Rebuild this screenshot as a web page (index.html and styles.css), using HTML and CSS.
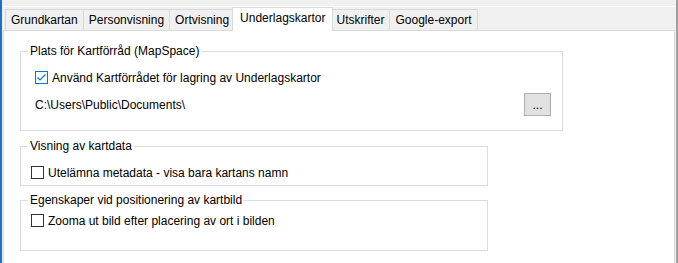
FILE: index.html
```html
<!DOCTYPE html>
<html lang="sv">
<head>
<meta charset="utf-8">
<title>Underlagskartor</title>
<link rel="stylesheet" href="styles.css">
</head>
<body>
<div class="window">
  <div class="topbar"></div>
  <div class="topline"></div>
  <div class="tabs">
    <div class="tab">Grundkartan</div>
    <div class="tab">Personvisning</div>
    <div class="tab">Ortvisning</div>
    <div class="tab selected">Underlagskartor</div>
    <div class="tab">Utskrifter</div>
    <div class="tab">Google-export</div>
  </div>
  <div class="panel">
    <fieldset class="group group-wide">
      <legend>Plats för Kartförråd (MapSpace)</legend>
      <div class="inner inner-wide">
        <label class="check-row">
          <span class="box checked"><svg viewBox="0 0 11 11" width="11" height="11"><polyline points="1.5,5.5 4,8 9.5,2.5" fill="none" stroke="#0078d7" stroke-width="1.2"/></svg></span>
          <span>Använd Kartförrådet för lagring av Underlagskartor</span>
        </label>
        <div class="path-row">
          <span>C:\Users\Public\Documents\</span>
          <button class="browse" type="button">...</button>
        </div>
      </div>
    </fieldset>
    <fieldset class="group group-mid">
      <legend>Visning av kartdata</legend>
      <div class="inner">
        <label class="check-row">
          <span class="box"></span>
          <span>Utelämna metadata - visa bara kartans namn</span>
        </label>
      </div>
    </fieldset>
    <fieldset class="group group-last">
      <legend>Egenskaper vid positionering av kartbild</legend>
      <div class="inner">
        <label class="check-row">
          <span class="box"></span>
          <span>Zooma ut bild efter placering av ort i bilden</span>
        </label>
      </div>
    </fieldset>
  </div>
</div>
</body>
</html>
```
FILE: styles.css
```css
html, body {
  margin: 0;
  padding: 0;
}
body {
  font-family: "Liberation Sans", Arial, sans-serif;
  font-size: 12px;
  color: #000;
  background: #f0f0f0;
}
.window {
  width: 678px;
  height: 263px;
  box-sizing: border-box;
  display: flex;
  flex-direction: column;
  background: #f0f0f0;
  border-left: 2px solid #1f6fcc;
  border-right: 2px solid #a0a0a0;
  padding: 0 1px 0 1px;
  overflow: hidden;
}
.topbar {
  height: 6px;
  flex: none;
}
.topline {
  height: 1px;
  background: #fff;
  flex: none;
}
.tabs {
  flex: none;
  height: 24px;
  display: flex;
  align-items: flex-end;
  padding-left: 2px;
  margin-bottom: -1px;
  position: relative;
  z-index: 1;
}
.tab {
  box-sizing: border-box;
  height: 21px;
  line-height: 20px;
  margin-bottom: 1px;
  padding: 0 5px;
  border: 1px solid #d9d9d9;
  border-bottom: none;
  margin-left: -1px;
  background: #f0f0f0;
  white-space: nowrap;
}
.tab:first-child {
  margin-left: 0;
}
.tab.selected {
  height: 24px;
  margin-bottom: 0;
  margin-left: -3px;
  margin-right: -2px;
  padding: 0 7px;
  background: #fff;
  position: relative;
  z-index: 2;
}
.panel {
  flex: 1;
  background: #fff;
  border: 1px solid #d9d9d9;
  border-bottom: none;
  padding: 13px 0 0 16px;
  display: flex;
  flex-direction: column;
  align-items: flex-start;
}
.group {
  margin: 0;
  box-sizing: border-box;
  border: 1px solid #dcdcdc;
  padding: 0 10px 0 7px;
  min-inline-size: 0;
}
.group legend {
  padding: 0 2px;
  line-height: 15px;
}
.group-wide {
  width: 543px;
  padding-top: 11px;
  padding-bottom: 14px;
}
.group-mid {
  width: 468px;
  margin-top: 8px;
  padding-top: 11px;
  padding-bottom: 5px;
}
.group-last {
  width: 468px;
  margin-top: 7px;
  padding-top: 5px;
  padding-bottom: 22px;
}
.inner {
  margin-left: 3px;
}
.inner-wide {
  margin-left: 7px;
  margin-right: 1px;
}
.check-row {
  display: flex;
  align-items: center;
  height: 15px;
  gap: 4px;
}
.box {
  box-sizing: border-box;
  width: 13px;
  height: 13px;
  border: 1px solid #333;
  background: #fff;
  display: flex;
  align-items: center;
  justify-content: center;
  flex: none;
}
.box.checked {
  border-color: #0078d7;
}
.box svg {
  display: block;
}
.path-row {
  margin-top: 8px;
  display: flex;
  align-items: center;
  justify-content: space-between;
  height: 23px;
}
.browse {
  box-sizing: border-box;
  width: 27px;
  height: 23px;
  padding: 0;
  margin: 0;
  border: 1px solid #adadad;
  background: #e1e1e1;
  font-family: "Liberation Sans", Arial, sans-serif;
  font-size: 12px;
  color: #000;
  line-height: 20px;
}
```
